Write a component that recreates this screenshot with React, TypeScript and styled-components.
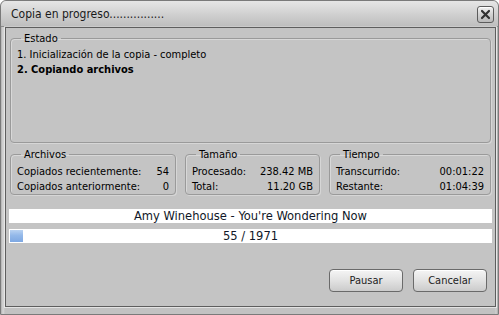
import styled, { createGlobalStyle } from 'styled-components';

const GlobalStyle = createGlobalStyle`
  html, body {
    margin: 0;
    padding: 0;
    background: #ffffff;
  }
  body {
    font-family: "DejaVu Sans Condensed", "Liberation Sans", sans-serif;
    font-size: 11px;
    color: #000;
  }
`;

// ! window frame
const Window = styled.div`
  width: 499px;
  height: 315px;
  box-sizing: border-box;
  display: flex;
  flex-direction: column;
  padding: 0 2px 7px 4px;
  border: 1px solid #7a7a7a;
  border-radius: 6px 6px 0 0;
  background: linear-gradient(90deg, #b0b0b0 0, #d8d8d8 2px, #c2c2c2 4px, #c2c2c2 calc(100% - 3px), #d4d4d4 calc(100% - 2px), #a8a8a8 100%);
  overflow: hidden;
`;

const TitleBar = styled.div`
  height: 25px;
  margin: 0 -2px 0 -4px;
  padding: 0 4px 0 10px;
  display: flex;
  align-items: center;
  justify-content: space-between;
  background: linear-gradient(180deg, #e6e6e6 0%, #d8d8d8 35%, #cdcdcd 60%, #bebebe 100%);
  border-bottom: 1px solid #8c8c8c;
  border-radius: 5px 5px 0 0;
`;

const Title = styled.div`
  font-size: 12px;
  color: #1a1a1a;
  white-space: nowrap;
`;

const CloseButton = styled.button`
  width: 17px;
  height: 17px;
  padding: 0;
  margin-top: 1px;
  display: flex;
  align-items: center;
  justify-content: center;
  border: 1px solid #5c5c5c;
  border-radius: 3px;
  background: linear-gradient(180deg, #f2f2f2 0%, #d2d2d2 50%, #b9b9b9 100%);
  box-shadow: inset 0 1px 0 #ffffff;
`;

const Client = styled.div`
  flex: 1;
  display: flex;
  flex-direction: column;
  padding: 4px 4px 0 4px;
  background: #c4c4c4;
  border: 1px solid #5e5e5e;
  box-shadow: 0 0 0 1px rgba(255, 255, 255, 0.55);
`;

// ! group boxes
const Group = styled.fieldset<{ $h: number }>`
  margin: 0;
  padding: 0 6px 0 6px;
  min-width: 0;
  height: ${(p) => p.$h}px;
  box-sizing: border-box;
  border: 1px solid #9a9a9a;
  border-radius: 4px;
  box-shadow: inset 1px 1px 0 rgba(255, 255, 255, 0.35), 1px 1px 0 rgba(255, 255, 255, 0.3);
`;

const Legend = styled.legend`
  margin-left: 4px;
  padding: 0 3px;
  line-height: 13px;
  font-size: 11px;
`;

const Lines = styled.div<{ $top: number }>`
  padding-top: ${(p) => p.$top}px;
`;

const Line = styled.div<{ $bold?: boolean }>`
  line-height: 15px;
  font-weight: ${(p) => (p.$bold ? 700 : 400)};
`;

const StatsRow = styled.div`
  margin-top: 5px;
  display: grid;
  grid-template-columns: 166px 135px 162px;
  justify-content: space-between;
`;

const StatLine = styled.div`
  display: flex;
  justify-content: space-between;
  line-height: 15px;
`;

// ! bars
const InfoBar = styled.div<{ $top: number }>`
  position: relative;
  margin: ${(p) => p.$top}px -1px 0 -1px;
  height: 14px;
  background: #ffffff;
  text-align: center;
  font-size: 12.8px;
  line-height: 14px;
  color: #101828;
  overflow: hidden;
`;

const Fill = styled.div`
  position: absolute;
  left: 1px;
  top: 1px;
  bottom: 1px;
  background: linear-gradient(180deg, #b9d2f1 0%, #93b8e9 45%, #7ea8e2 100%);
`;

const BarText = styled.span`
  position: relative;
`;

// ! footer
const Footer = styled.div`
  margin-top: 26px;
  padding-right: 4px;
  display: flex;
  justify-content: flex-end;
  gap: 10px;
`;

const Button = styled.button`
  width: 74px;
  height: 23px;
  padding: 0;
  font-family: inherit;
  font-size: 11px;
  color: #222;
  border: 1px solid #6a6a6a;
  border-radius: 4px;
  background: linear-gradient(180deg, #f5f5f5 0%, #e2e2e2 50%, #cbcbcb 100%);
  box-shadow: inset 0 1px 0 #ffffff;
`;

const stats = [
  {
    title: 'Archivos',
    rows: [
      ['Copiados recientemente:', '54'],
      ['Copiados anteriormente:', '0'],
    ],
  },
  {
    title: 'Tamaño',
    rows: [
      ['Procesado:', '238.42 MB'],
      ['Total:', '11.20 GB'],
    ],
  },
  {
    title: 'Tiempo',
    rows: [
      ['Transcurrido:', '00:01:22'],
      ['Restante:', '01:04:39'],
    ],
  },
];

const done = 55;
const total = 1971;

const App = () => {
  return (
    <>
      <GlobalStyle />
      <Window>
        {/* title bar */}
        <TitleBar>
          <Title>Copia en progreso................</Title>
          <CloseButton aria-label="Cerrar">
            <svg width="11" height="11" viewBox="0 0 11 11">
              <path d="M2 2 L9 9 M9 2 L2 9" stroke="#333" strokeWidth="2.2" strokeLinecap="round" />
            </svg>
          </CloseButton>
        </TitleBar>

        <Client>
          {/* estado */}
          <Group $h={111}>
            <Legend>Estado</Legend>
            <Lines $top={2}>
              <Line>1. Inicialización de la copia - completo</Line>
              <Line $bold>2. Copiando archivos</Line>
            </Lines>
          </Group>

          {/* stats */}
          <StatsRow>
            {stats.map((s) => (
              <Group key={s.title} $h={47}>
                <Legend>{s.title}</Legend>
                <Lines $top={3}>
                  {s.rows.map(([k, v]) => (
                    <StatLine key={k}>
                      <span>{k}</span>
                      <span>{v}</span>
                    </StatLine>
                  ))}
                </Lines>
              </Group>
            ))}
          </StatsRow>

          {/* current file & progress */}
          <InfoBar $top={14}>Amy Winehouse - You're Wondering Now</InfoBar>
          <InfoBar $top={6}>
            <Fill style={{ width: `${(done / total) * 100}%` }} />
            <BarText>
              {done} / {total}
            </BarText>
          </InfoBar>

          {/* buttons */}
          <Footer>
            <Button>Pausar</Button>
            <Button>Cancelar</Button>
          </Footer>
        </Client>
      </Window>
    </>
  );
};

export default App;
